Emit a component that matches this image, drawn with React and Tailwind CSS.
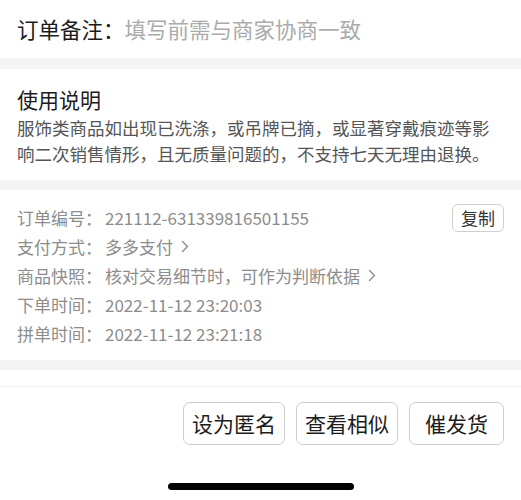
import React from "react";

const font = { fontFamily: '"Noto Sans CJK SC", "Noto Sans", sans-serif' };

function Chevron() {
  return (
    <svg width="8" height="13" viewBox="0 0 8 13" className="ml-[8px] inline-block">
      <path d="M1.5 1.5 L6.5 6.5 L1.5 11.5" fill="none" stroke="#8a8a8a" strokeWidth="1.4" strokeLinecap="round" strokeLinejoin="round" />
    </svg>
  );
}

function Row({ label, children, right }) {
  return (
    <div className="flex h-[29px] items-center justify-between">
      <div className="flex items-center text-[17px] text-[#8c8c8c]">
        <span>{label}</span>
        <span className="ml-[3px] flex items-center">{children}</span>
      </div>
      {right}
    </div>
  );
}

export default function App() {
  return (
    <div className="w-[521px] h-[500px] bg-white overflow-hidden" style={font}>
      <div className="h-[58px] flex items-center px-[17px] text-[21.5px]">
        <span className="text-[#1c1c1c]">订单备注：</span>
        <span className="text-[#ababab]">填写前需与商家协商一致</span>
      </div>
      <div className="h-[11px] bg-[#f4f4f4]" />
      <div className="h-[111px] px-[17px] pt-[16px]">
        <div className="text-[21px] leading-[28px] text-[#1c1c1c]">使用说明</div>
        <div className="mt-[2px] text-[17.5px] leading-[26px] text-[#555]">
          服饰类商品如出现已洗涤，或吊牌已摘，或显著穿戴痕迹等影响二次销售情形，且无质量问题的，不支持七天无理由退换。
        </div>
      </div>
      <div className="h-[10px] bg-[#f4f4f4]" />
      <div className="h-[170px] pl-[17px] pr-[17px] pt-[13px]">
        <Row
          label="订单编号："
          right={
            <div className="h-[28px] w-[52px] flex items-center justify-center rounded-[6px] border border-[#cfcfcf] text-[17px] text-[#333]">
              复制
            </div>
          }
        >
          221112-631339816501155
        </Row>
        <Row label="支付方式：">
          多多支付
          <Chevron />
        </Row>
        <Row label="商品快照：">
          核对交易细节时，可作为判断依据
          <Chevron />
        </Row>
        <Row label="下单时间：">2022-11-12 23:20:03</Row>
        <Row label="拼单时间：">2022-11-12 23:21:18</Row>
      </div>
      <div className="h-[10px] bg-[#f4f4f4]" />
      <div className="h-[16px]" />
      <div className="h-[1px] bg-[#f0f0f0]" />
      <div className="flex justify-end gap-[11px] pr-[17px] pt-[15px]">
        <div className="h-[43px] w-[102px] flex items-center justify-center rounded-[7px] border border-[#cccccc] text-[21px] text-[#1c1c1c]">设为匿名</div>
        <div className="h-[43px] w-[102px] flex items-center justify-center rounded-[7px] border border-[#cccccc] text-[21px] text-[#1c1c1c]">查看相似</div>
        <div className="h-[43px] w-[95px] flex items-center justify-center rounded-[7px] border border-[#cccccc] text-[21px] text-[#1c1c1c]">催发货</div>
      </div>
      <div className="flex justify-center pt-[38px]">
        <div className="h-[7px] w-[186px] rounded-full bg-black" />
      </div>
    </div>
  );
}
